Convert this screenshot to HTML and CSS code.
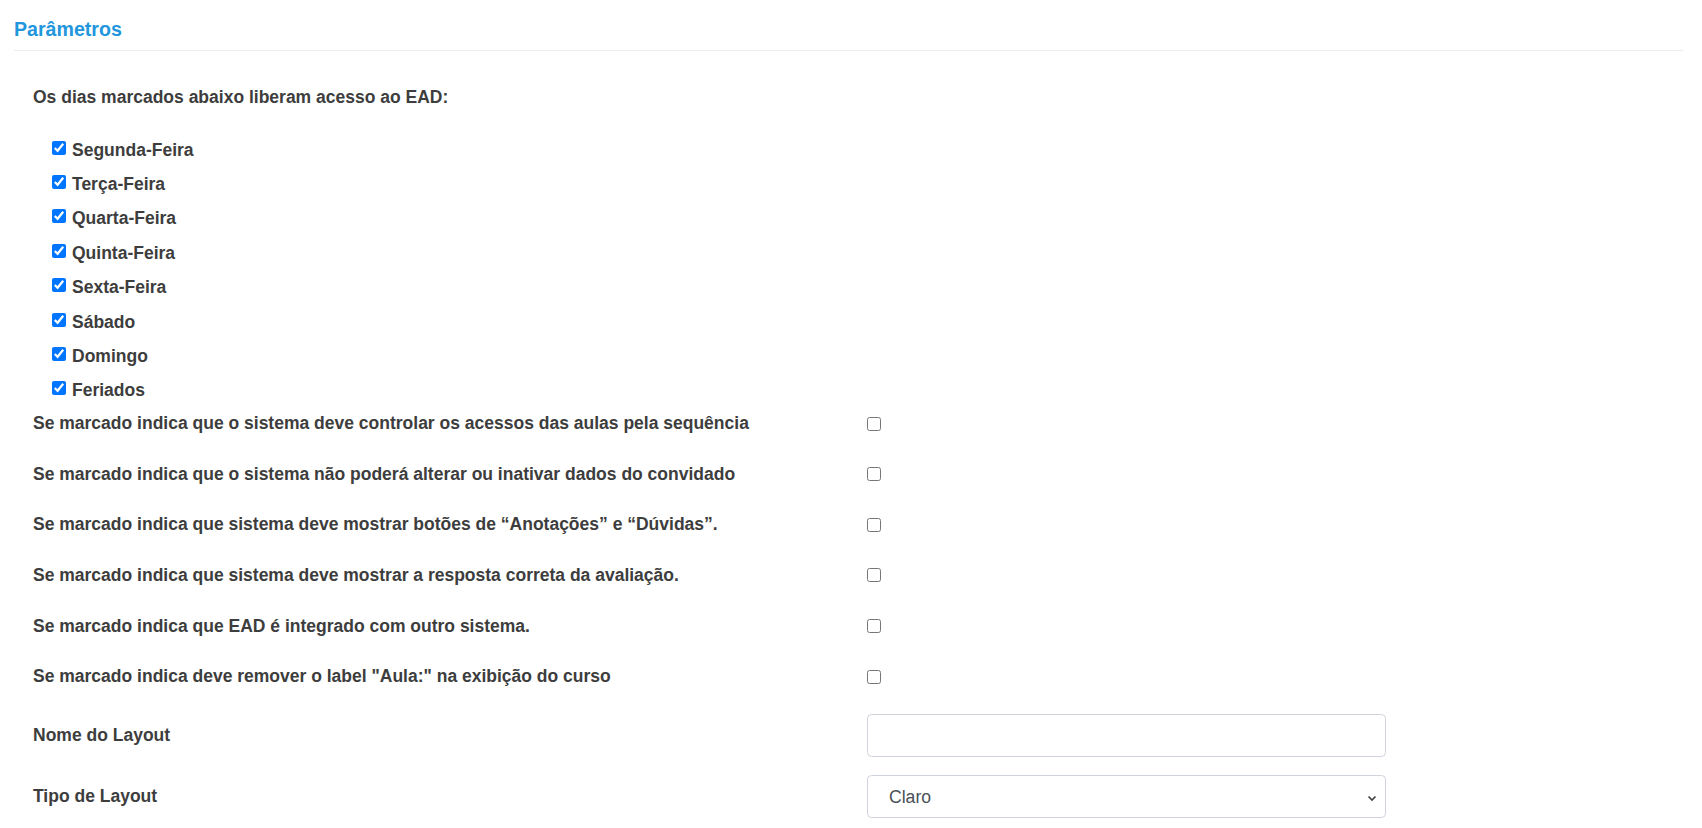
FILE: index.html
```html
<!DOCTYPE html>
<html lang="pt-BR">
<head>
    <meta charset="UTF-8">
    <meta name="viewport" content="width=device-width, initial-scale=1.0">
    <title>Parâmetros</title>
    <link rel="stylesheet" href="styles.css">
</head>
<body>

<div class="page">
    <h2 class="title">Parâmetros</h2>

    <div class="content">
        <p class="intro">Os dias marcados abaixo liberam acesso ao EAD:</p>

        <div class="days">
            <label class="day"><input type="checkbox" checked> Segunda-Feira</label>
            <label class="day"><input type="checkbox" checked> Terça-Feira</label>
            <label class="day"><input type="checkbox" checked> Quarta-Feira</label>
            <label class="day"><input type="checkbox" checked> Quinta-Feira</label>
            <label class="day"><input type="checkbox" checked> Sexta-Feira</label>
            <label class="day"><input type="checkbox" checked> Sábado</label>
            <label class="day"><input type="checkbox" checked> Domingo</label>
            <label class="day"><input type="checkbox" checked> Feriados</label>
        </div>

        <div class="options">
            <div class="option">
                <label for="opt1">Se marcado indica que o sistema deve controlar os acessos das aulas pela sequência</label>
                <input type="checkbox" id="opt1">
            </div>
            <div class="option">
                <label for="opt2">Se marcado indica que o sistema não poderá alterar ou inativar dados do convidado</label>
                <input type="checkbox" id="opt2">
            </div>
            <div class="option">
                <label for="opt3">Se marcado indica que sistema deve mostrar botões de “Anotações” e “Dúvidas”.</label>
                <input type="checkbox" id="opt3">
            </div>
            <div class="option">
                <label for="opt4">Se marcado indica que sistema deve mostrar a resposta correta da avaliação.</label>
                <input type="checkbox" id="opt4">
            </div>
            <div class="option">
                <label for="opt5">Se marcado indica que EAD é integrado com outro sistema.</label>
                <input type="checkbox" id="opt5">
            </div>
            <div class="option">
                <label for="opt6">Se marcado indica deve remover o label "Aula:" na exibição do curso</label>
                <input type="checkbox" id="opt6">
            </div>
        </div>

        <div class="fields">
            <div class="field">
                <label for="layoutName">Nome do Layout</label>
                <input type="text" id="layoutName" class="form-control">
            </div>
            <div class="field">
                <label for="layoutType">Tipo de Layout</label>
                <div class="select-wrap">
                    <select id="layoutType" class="form-control">
                        <option>Claro</option>
                        <option>Escuro</option>
                    </select>
                    <svg class="select-arrow" width="10" height="7" viewBox="0 0 10 7">
                        <path d="M1.5 1.5 L5 5 L8.5 1.5" fill="none" stroke="#444" stroke-width="1.7"/>
                    </svg>
                </div>
            </div>
        </div>
    </div>
</div>

</body>
</html>
```

FILE: styles.css
```css
body {
    font-family: "Liberation Sans", Arial, sans-serif;
    color: #3d3d3d;
    background-color: #fff;
    margin: 0;
    padding: 0;
}

.page {
    padding: 0 19px 0 14px;
}

.title {
    margin: 0;
    padding-top: 17px;
    padding-bottom: 9px;
    font-size: 19.6px;
    line-height: 24px;
    font-weight: bold;
    color: #2196dc;
    border-bottom: 1px solid #ececec;
}

.content {
    padding-left: 19px;
}

.intro {
    margin: 36px 0 0;
    font-size: 17.5px;
    line-height: 21px;
    font-weight: bold;
}

.days {
    margin-top: 25px;
    padding-left: 19px;
    display: flex;
    flex-direction: column;
}

.day {
    display: flex;
    align-items: center;
    gap: 6px;
    height: 34.4px;
    font-size: 17.5px;
    font-weight: bold;
}

.day input {
    width: 14px;
    height: 14px;
    margin: 0 0 5px;
}

.options {
    margin-top: 5px;
    display: flex;
    flex-direction: column;
    gap: 29.6px;
}

.option {
    display: grid;
    grid-template-columns: 834px 14px;
    align-items: center;
    font-size: 17.5px;
    line-height: 21px;
    font-weight: bold;
}

.option input {
    width: 14px;
    height: 14px;
    margin: 0;
}

.fields {
    margin-top: 27px;
    display: flex;
    flex-direction: column;
    gap: 18px;
}

.field {
    display: grid;
    grid-template-columns: 834px 519px;
    align-items: center;
}

.field label {
    font-size: 17.5px;
    font-weight: bold;
}

.form-control {
    box-sizing: border-box;
    width: 519px;
    height: 43px;
    padding: 0 21px;
    border: 1px solid #ced4da;
    border-radius: 4.5px;
    background-color: #fff;
    font-family: "Liberation Sans", Arial, sans-serif;
    font-size: 17.6px;
    color: #495057;
}

select.form-control {
    appearance: none;
    -webkit-appearance: none;
}

.select-wrap {
    position: relative;
    width: 519px;
}

.select-arrow {
    position: absolute;
    right: 9px;
    top: 20px;
    pointer-events: none;
}
```
